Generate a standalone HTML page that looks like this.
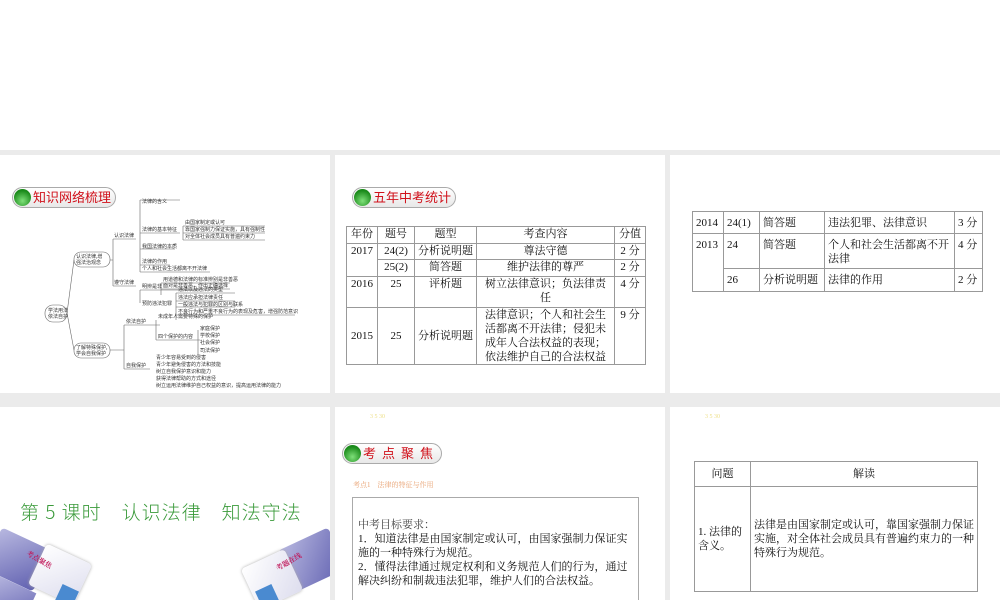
<!DOCTYPE html>
<html style="width:1000px;height:600px;overflow:hidden"><head><meta charset="utf-8"><style>
*{margin:0;padding:0;box-sizing:border-box}
body{width:1000px;height:600px;background:#ebebeb;position:relative;overflow:hidden;font-family:"Liberation Serif","Noto Serif CJK SC",serif;color:#111}
.s{position:absolute;background:#fff;overflow:hidden}
.badge{position:absolute;height:21px;border:1px solid #aaa;border-radius:11px;background:linear-gradient(#fff,#e8e8e8);color:#d0101a;font-family:"Liberation Sans","Noto Sans CJK SC",sans-serif;font-size:13px;line-height:19px;padding:0 4px 0 20px;white-space:nowrap}
.badge:before{content:"";position:absolute;left:1px;top:1px;width:17px;height:17px;border-radius:50%;background:radial-gradient(circle at 50% 70%,#7fe07a,#1a8a1a 70%)}
table{border-collapse:collapse;position:absolute;font-size:11px}
td{border:1px solid #999;padding:0 3px;vertical-align:top;line-height:14px}
.a{position:absolute;white-space:nowrap}
.nw{white-space:nowrap}
</style></head><body>
<div style="position:absolute;left:0;top:0;width:1000px;height:150px;background:#fff"></div>

<div class="s" style="left:0;top:155px;width:330px;height:238px">
<div class="badge" style="left:12px;top:32px">知识网络梳理</div>
<svg width="330" height="238" style="position:absolute;left:0;top:0" font-size="5" font-family="Noto Sans CJK SC" fill="#333">
<g stroke="#666" fill="none" stroke-width=".6">
<rect x="45" y="150" width="22" height="17" rx="8"/><rect x="74" y="97" width="36" height="15" rx="7"/><rect x="74" y="188" width="36" height="15" rx="7"/>
<path d="M67 158 L74 105 M67 158 L74 195 M110 105 L113 105 M113 84 V131 M113 84 H136 M113 131 H136 M140 45 V117 M140 45H180 M140 78H180 M140 94H175 M140 110H170 M140 117H210 M183 71V85 M183 71H265 M183 78H265 M183 85H265 M140 135V148 M140 135H200 M161 128V140 M161 128H230 M161 134H230 M176 138V165 M176 138H235 M176 146H235 M176 152H235 M176 160H295 M110 195H124 M124 170V214 M124 170H160 M124 214H150 M156 165V185 M156 185H200 M198 175V200"/>
</g>
<text x="48" y="157">学法用法</text><text x="48" y="163">依法自护</text>
<text x="76" y="103">认识法律,增</text><text x="76" y="109">强法治观念</text>
<text x="76" y="194">了解特殊保护,</text><text x="76" y="200">学会自我保护</text>
<text x="114" y="82">认识法律</text><text x="114" y="129">遵守法律</text>
<text x="142" y="48">法律的含义</text><text x="142" y="76">法律的基本特征</text><text x="142" y="93">我国法律的本质</text><text x="142" y="108">法律的作用</text><text x="142" y="115">个人和社会生活都离不开法律</text>
<text x="185" y="69">由国家制定或认可</text><text x="185" y="76">靠国家强制力保证实施，具有强制性</text><text x="185" y="83">对全体社会成员具有普遍约束力</text>
<text x="142" y="133">明辨是非</text><text x="142" y="150">预防违法犯罪</text>
<text x="163" y="126">用道德和法律的标准辨别是非善恶</text><text x="163" y="132">面对是非善恶，作出正确选择</text>
<text x="178" y="136">违法以及违法的类型</text><text x="178" y="144">违法应承担法律责任</text><text x="178" y="151">一般违法与犯罪的区别与联系</text><text x="178" y="158">不良行为和严重不良行为的表现及危害，增强防范意识</text>
<text x="126" y="168">依法自护</text><text x="126" y="212">自我保护</text>
<text x="158" y="163">未成年人需要特殊的保护</text><text x="158" y="183">四个保护的内容</text>
<text x="200" y="175">家庭保护</text><text x="200" y="182">学校保护</text><text x="200" y="189">社会保护</text><text x="200" y="197">司法保护</text>
<text x="156" y="204">青少年容易受到的侵害</text><text x="156" y="211">青少年避免侵害的方法和技能</text><text x="156" y="218">树立自我保护意识和能力</text><text x="156" y="225">获得法律帮助的方式和途径</text><text x="156" y="232">树立运用法律维护自己权益的意识，提高运用法律的能力</text>
</svg></div>

<div class="s" style="left:335px;top:155px;width:330px;height:238px">
<div class="badge" style="left:17px;top:32px">五年中考统计</div>
<table style="left:11px;top:71px;width:300px;text-align:center">
<tr style="height:17px"><td style="width:31px">年份</td><td style="width:37px">题号</td><td style="width:62px">题型</td><td style="width:138px">考查内容</td><td class="nw">分值</td></tr>
<tr style="height:16px"><td rowspan="2">2017</td><td>24(2)</td><td class="nw">分析说明题</td><td>尊法守德</td><td class="nw">2 分</td></tr>
<tr style="height:17px"><td>25(2)</td><td>简答题</td><td>维护法律的尊严</td><td class="nw">2 分</td></tr>
<tr style="height:31px"><td>2016</td><td>25</td><td>评析题</td><td>树立法律意识；负法律责任</td><td class="nw">4 分</td></tr>
<tr style="height:56px"><td style="vertical-align:middle">2015</td><td style="vertical-align:middle">25</td><td style="vertical-align:middle" class="nw">分析说明题</td><td>法律意识；个人和社会生活都离不开法律；侵犯未成年人合法权益的表现；依法维护自己的合法权益</td><td class="nw">9 分</td></tr>
</table></div>

<div class="s" style="left:670px;top:155px;width:330px;height:238px">
<table style="left:22px;top:56px;width:291px">
<tr style="height:22px"><td style="width:31px;vertical-align:middle">2014</td><td style="width:36px;vertical-align:middle" class="nw">24(1)</td><td style="width:65px;vertical-align:middle">简答题</td><td style="width:130px;vertical-align:middle">违法犯罪、法律意识</td><td style="vertical-align:middle" class="nw">3 分</td></tr>
<tr style="height:35px"><td rowspan="2" style="padding-top:4px">2013</td><td style="padding-top:4px">24</td><td style="padding-top:4px">简答题</td><td style="padding-top:4px">个人和社会生活都离不开法律</td><td style="padding-top:4px" class="nw">4 分</td></tr>
<tr style="height:23px"><td style="vertical-align:middle">26</td><td style="vertical-align:middle" class="nw">分析说明题</td><td style="vertical-align:middle">法律的作用</td><td style="vertical-align:middle" class="nw">2 分</td></tr>
</table></div>

<div class="s" style="left:0;top:407px;width:330px;height:193px">
<div class="a" style="left:20px;top:91px;font-size:19px;color:#3a9a3a;font-family:'Noto Sans CJK SC',sans-serif;letter-spacing:1px;font-weight:300">第 5 课时　认识法律　知法守法</div>
<div style="position:absolute;left:-10px;top:130px;width:55px;height:45px;background:linear-gradient(135deg,#b8b8e0,#6060b0);transform:rotate(25deg);border-radius:4px"></div>
<div style="position:absolute;left:35px;top:145px;width:50px;height:45px;background:linear-gradient(135deg,#fff,#dde);transform:rotate(25deg);border-radius:4px;box-shadow:0 0 3px #aaa"></div>
<div style="position:absolute;left:-15px;top:175px;width:45px;height:40px;background:linear-gradient(135deg,#b8b8e0,#6060b0);transform:rotate(25deg)"></div>
<div style="position:absolute;left:58px;top:180px;width:18px;height:18px;background:#4a8ad0;transform:rotate(25deg)"></div>
<div class="a" style="left:25px;top:148px;font-size:7px;color:#c0185a;transform:rotate(30deg);font-weight:bold">考点聚焦</div>
<div style="position:absolute;left:285px;top:130px;width:55px;height:45px;background:linear-gradient(135deg,#b8b8e0,#6060b0);transform:rotate(-25deg);border-radius:4px"></div>
<div style="position:absolute;left:248px;top:150px;width:48px;height:45px;background:linear-gradient(135deg,#fff,#dde);transform:rotate(-25deg);border-radius:4px;box-shadow:0 0 3px #aaa"></div>
<div style="position:absolute;left:258px;top:180px;width:18px;height:18px;background:#4a8ad0;transform:rotate(-25deg)"></div>
<div class="a" style="left:275px;top:150px;font-size:7px;color:#c0185a;transform:rotate(-30deg);font-weight:bold">考题在线</div>
</div>

<div class="s" style="left:335px;top:407px;width:330px;height:193px">
<div class="a" style="left:35px;top:7px;font-size:6px;color:#eee08a">3 5 30</div>
<div class="badge" style="left:7px;top:36px;letter-spacing:6px;padding-right:2px">考点聚焦</div>
<div class="a" style="left:18px;top:73px;font-size:7px;color:#e8a070">考点1　法律的特征与作用</div>
<div style="position:absolute;left:17px;top:90px;width:287px;height:110px;border:1px solid #aaa;font-size:11px;line-height:14px;padding:20px 5px 0 5px">
<div style="color:#444">中考目标要求：</div>
<div>1．知道法律是由国家制定或认可，由国家强制力保证实施的一种特殊行为规范。</div>
<div>2．懂得法律通过规定权利和义务规范人们的行为，通过解决纠纷和制裁违法犯罪，维护人们的合法权益。</div>
</div></div>

<div class="s" style="left:670px;top:407px;width:330px;height:193px">
<div class="a" style="left:35px;top:7px;font-size:6px;color:#eee08a">3 5 30</div>
<table style="left:24px;top:54px;width:284px;height:131px;font-size:11px">
<tr style="height:25px"><td style="width:56px;text-align:center;vertical-align:middle">问题</td><td style="text-align:center;vertical-align:middle">解读</td></tr>
<tr><td style="vertical-align:middle">1. 法律的含义。</td><td style="vertical-align:middle">法律是由国家制定或认可，靠国家强制力保证实施，对全体社会成员具有普遍约束力的一种特殊行为规范。</td></tr>
</table></div>
</body></html>
